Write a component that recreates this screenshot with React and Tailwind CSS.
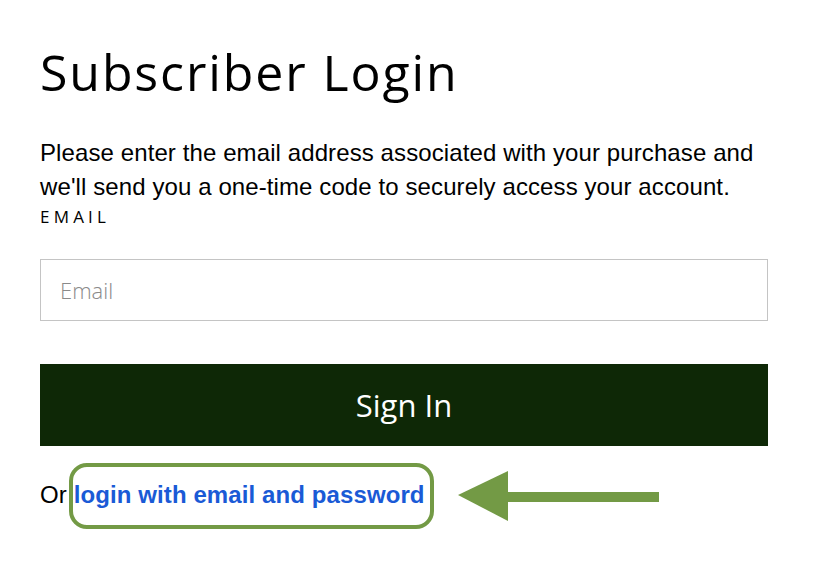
export default function App() {
  return (
    <div className="relative w-[814px] h-[570px] bg-white overflow-hidden">
      <div className="pl-[40px] pr-[40px] pt-[40px]">
        <h1
          className="text-[50px] leading-[64px] text-black tracking-[1.9px]"
          style={{ fontFamily: '"Open Sans", sans-serif' }}
        >
          Subscriber Login
        </h1>

        <p
          className="mt-[32px] w-[728px] text-[24px] leading-[34px] tracking-[0.1px] text-black"
          style={{ fontFamily: '"Liberation Sans", Arial, sans-serif' }}
        >
          Please enter the email address associated with your purchase and we'll send you a one-time code to securely access your account.
        </p>

        <label
          className="block text-[17px] leading-[18px] tracking-[4.2px] text-black mt-[4px]"
          style={{ fontFamily: '"Open Sans", sans-serif' }}
        >
          EMAIL
        </label>

        <input
          type="text"
          placeholder="Email"
          className="mt-[33px] block w-[728px] h-[62px] border border-[#c4c4c4] px-[19px] text-[22px] font-light outline-none placeholder:text-[#8a8a8a]"
          style={{ fontFamily: '"Open Sans", sans-serif' }}
        />

        <button
          className="mt-[43px] block w-[728px] h-[82px] bg-[#0e2806] text-white text-[31px]"
          style={{ fontFamily: '"Open Sans", sans-serif' }}
        >
          Sign In
        </button>

        <div
          className="mt-[35px] flex items-center text-[24px] leading-[28px]"
          style={{ fontFamily: '"Liberation Sans", Arial, sans-serif' }}
        >
          <span className="text-black">Or</span>
          <a href="#" className="relative ml-[7px] font-bold tracking-[0.1px] text-[#1a5ad6]">
            login with email and password
            <span className="absolute -left-[5px] -right-[9px] -top-[18px] -bottom-[20px] border-[4px] border-[#739a45] rounded-[18px]" />
          </a>
        </div>
      </div>

      {/* annotation arrow */}
      <svg className="absolute left-[456px] top-[470px]" width="206" height="54" viewBox="0 0 206 54">
        <polygon points="2,25 52,1 52,51" fill="#739a45" />
        <rect x="50" y="22" width="153" height="10" fill="#739a45" />
      </svg>
    </div>
  )
}
